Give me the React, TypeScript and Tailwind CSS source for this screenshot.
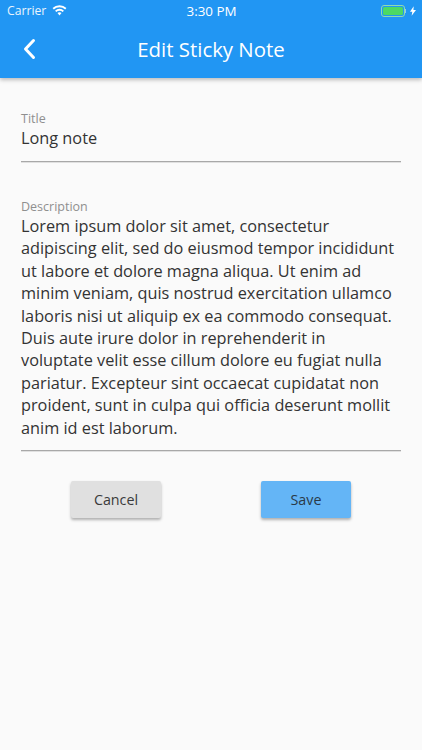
import React from 'react';

const description =
  'Lorem ipsum dolor sit amet, consectetur adipiscing elit, sed do eiusmod tempor incididunt ut labore et dolore magna aliqua. Ut enim ad minim veniam, quis nostrud exercitation ullamco laboris nisi ut aliquip ex ea commodo consequat. Duis aute irure dolor in reprehenderit in voluptate velit esse cillum dolore eu fugiat nulla pariatur. Excepteur sint occaecat cupidatat non proident, sunt in culpa qui officia deserunt mollit anim id est laborum.';

const StatusBar = () => (
  <div className="h-[22px] flex items-center justify-between pl-[7px] pr-[6px] text-white font-['Open_Sans',sans-serif]">
    <div className="flex-1 flex items-center gap-[6px]">
      <span className="opacity-90 text-[12.2px]">Carrier</span>
      <svg width="15" height="11" viewBox="0 0 15 11" fill="none" className="-mt-[1px]">
        <path d="M1.200 3.800a9 9 0 0 1 12.600 0" stroke="white" strokeWidth="1.900" />
        <path d="M3.700 6.300a5.400 5.400 0 0 1 7.600 0" stroke="white" strokeWidth="1.900" />
        <path d="M7.500 7.300c-.8 0-1.500.3-2 .8l2 2.300 2-2.300c-.5-.5-1.200-.8-2-.8z" fill="white" />
      </svg>
    </div>
    <span className="font-medium text-[13.400px]">3:30 PM</span>
    <div className="flex-1 flex items-center justify-end">
      <div className="w-[24px] h-[12px] rounded-[3px] border border-[#8fdcae] p-[1px]">
        <div className="w-full h-full rounded-[1.500px] bg-[#4cd964]" />
      </div>
      <div className="w-[1.500px] h-[4px] bg-[#8fc9f5] mr-[4px]" />
      <svg width="6" height="10" viewBox="0 0 7 11" fill="white">
        <path d="M4.300 0 0 6.300h2.700L1.900 11 7 4.300H4z" />
      </svg>
    </div>
  </div>
);

const AppBar = () => (
  <div className="bg-[#2196f3] h-[78px] shadow-[0_2px_4px_rgba(0,0,0,0.25)] relative">
    <StatusBar />
    <div className="h-[56px] flex items-center relative">
      <svg className="absolute left-[22px] top-[16px]" width="14" height="22" viewBox="0 0 14 22" fill="none">
        <path d="M11.500 2.500 3.500 11l8 8.500" stroke="white" strokeWidth="3" strokeLinecap="round" strokeLinejoin="round" />
      </svg>
      <h1 className="flex-1 text-center text-white text-[20.400px] font-['Open_Sans',sans-serif] -mt-[1px]">Edit Sticky Note</h1>
    </div>
  </div>
);

export default function App() {
  return (
    <div className="w-[422px] h-[750px] bg-[#fafafa] overflow-hidden font-['Open_Sans',sans-serif]">
      <AppBar />
      <div className="px-[21px] pt-[32px]">
        <label className="block text-[12.500px] leading-[17px] text-[#8f8f8f]">Title</label>
        <div className="text-[16.300px] leading-[22px] text-[#333333] pb-[12px] border-b border-[#a8a8a8] shadow-[0_1px_0_rgba(0,0,0,0.1)]">Long note</div>

        <label className="block mt-[36px] text-[12.500px] leading-[17px] text-[#8f8f8f]">Description</label>
        <div className="text-[16.300px] leading-[22.400px] text-[#333333] pb-[11px] border-b border-[#a8a8a8] shadow-[0_1px_0_rgba(0,0,0,0.1)]">{description}</div>

        <div className="flex justify-between mt-[30px] pl-[50px] pr-[50px]">
          <button className="w-[90px] h-[37px] rounded-[2px] bg-[#e0e0e0] text-[14.300px] text-[#3a3a3a] shadow-[0_2px_3px_rgba(0,0,0,0.3)]">Cancel</button>
          <button className="w-[90px] h-[37px] rounded-[2px] bg-[#64b5f6] text-[14.300px] text-[#2a3a48] shadow-[0_2px_3px_rgba(0,0,0,0.3)]">Save</button>
        </div>
      </div>
    </div>
  );
}
